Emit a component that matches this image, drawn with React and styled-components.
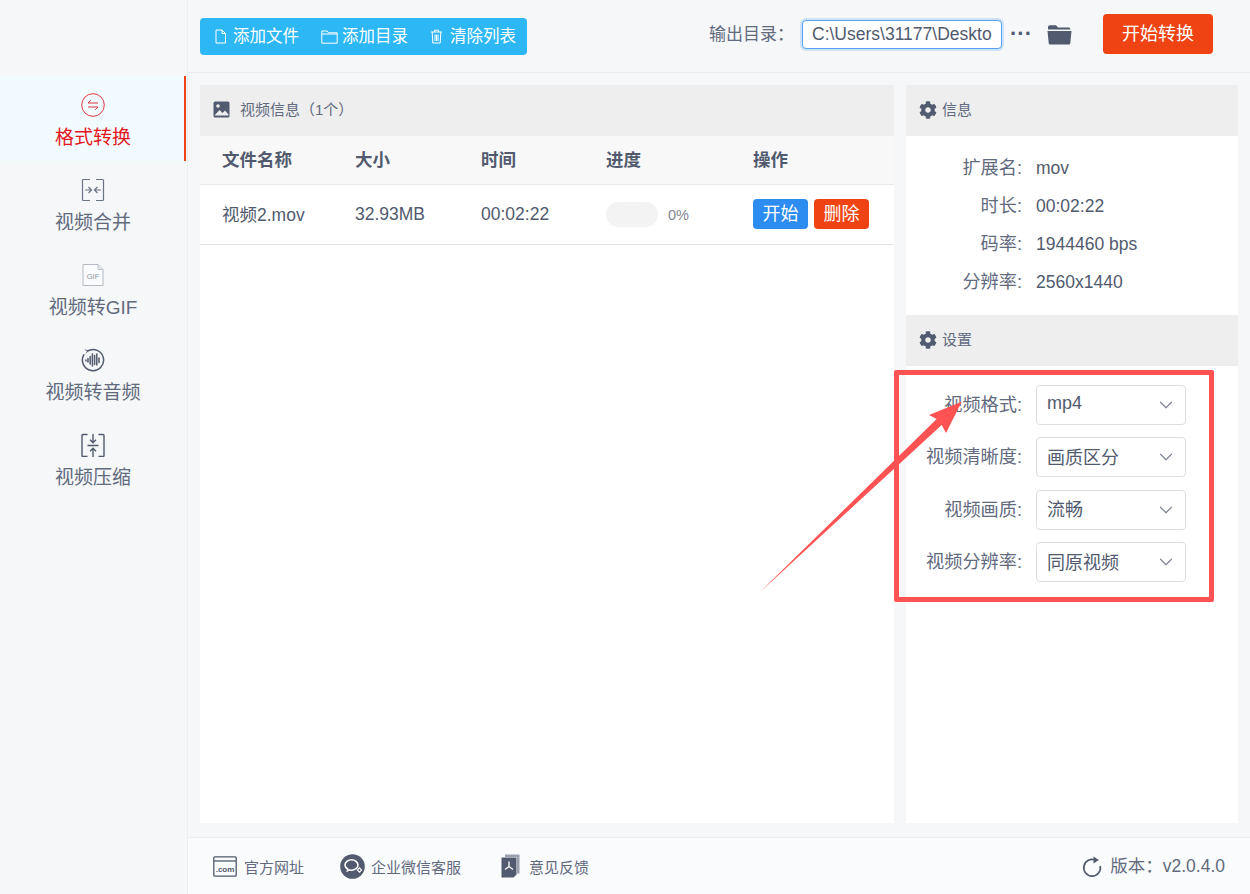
import React from "react";
import styled, { createGlobalStyle } from "styled-components";
import { ChevronDown } from "lucide-react";
import { FaCog } from "react-icons/fa";

const INK = "#515a6e";
const FONT = `"Liberation Sans", "Noto Sans CJK SC", sans-serif`;

const GlobalStyle = createGlobalStyle`
  html, body {
    margin: 0;
    padding: 0;
    background: #f5f7f9;
    font-family: ${FONT};
    color: ${INK};
  }
  * { box-sizing: border-box; }
`;

function ConvertIcon() {
  return (
    <svg width="24" height="24" viewBox="0 0 24 24" fill="none" stroke="#e0393e" strokeWidth="1">
      <circle cx="12" cy="12" r="11.3" />
      <path d="M7 10h10M7 10l2.800-2.800M17 14H7M17 14l-2.800 2.800" />
    </svg>
  );
}

function MergeIcon() {
  return (
    <svg width="24" height="24" viewBox="0 0 24 24" fill="none" stroke="#6b7386" strokeWidth="1.200">
      <path d="M9 1.500H2.500a1 1 0 0 0-1 1v19a1 1 0 0 0 1 1H9M15 1.500h6.500a1 1 0 0 1 1 1v19a1 1 0 0 1-1 1H15" />
      <path d="M4 12h6.500M7.500 9l3 3-3 3M20 12h-6.500M16.500 9l-3 3 3 3" />
    </svg>
  );
}

function GifIcon() {
  return (
    <svg width="24" height="24" viewBox="0 0 24 24" fill="none">
      <path d="M2 1.500h15l5 5v16H2z" fill="#fafbfc" stroke="#b4b9c4" strokeWidth="1" />
      <path d="M17 1.500v5h5" fill="#e4e6eb" stroke="#b4b9c4" strokeWidth="0.800" />
      <text x="12" y="16" textAnchor="middle" fontSize="7.500" fill="#8d93a1" fontFamily={FONT}>GIF</text>
    </svg>
  );
}

function AudioIcon() {
  return (
    <svg width="24" height="24" viewBox="0 0 24 24" fill="none" stroke={INK} strokeLinecap="round">
      <path d="M6.500 3A10.600 10.600 0 1 1 2.800 6.800" strokeWidth="1.500" />
      <path d="M4.300 1.800 6.800 3 5.300 5" strokeWidth="0.800" />
      <path d="M5 12v1M7 10.500v3.500M9.200 8.500v7.500M11.400 6v12" strokeWidth="1.500" />
      <path d="M13.600 7.500v9M15.800 6v11M18 10v4.500" strokeWidth="1.500" />
    </svg>
  );
}

function CompressIcon() {
  return (
    <svg width="24" height="24" viewBox="0 0 24 24" fill="none" stroke={INK} strokeWidth="1.400">
      <path d="M6.500 1.500H2a1 1 0 0 0-1 1v20a1 1 0 0 0 1 1h4.500M17.500 1.500H22a1 1 0 0 1 1 1v20a1 1 0 0 1-1 1h-4.500" />
      <path d="M6.500 12.500h11M12 1v8.500M9 6.800l3 3 3-3M12 24v-8.500M9 18.200l3-3 3 3" />
    </svg>
  );
}

function FileIcon() {
  return (
    <svg width="13" height="15" viewBox="0 0 13 15" fill="none" stroke="#fff" strokeWidth="1">
      <path d="M2 1h6l3.500 3.500V14H2zM8 1v3.500h3.500" />
    </svg>
  );
}

function FolderIcon() {
  return (
    <svg width="17" height="14" viewBox="0 0 17 14" fill="none" stroke="#fff" strokeWidth="1">
      <path d="M.8 1h5.400l1.300 1.800h8.700v10.400H.8zM.8 4h15.400" />
    </svg>
  );
}

function TrashIcon() {
  return (
    <svg width="13" height="15" viewBox="0 0 13 15" fill="none" stroke="#fff" strokeWidth="1">
      <path d="M1 3h11M4.500 3V1.200h4V3M2.200 3l.6 11h7.400l.6-11M5 5.500v6.500M6.500 5.500v6.500M8 5.500v6.500" />
    </svg>
  );
}

function ImageIcon() {
  return (
    <svg width="17" height="17" viewBox="0 0 17 17">
      <rect x="0.500" y="0.500" width="16" height="16" rx="1.500" fill={INK} />
      <circle cx="5" cy="5" r="1.800" fill="#eee" />
      <path d="M1.500 14.500 6.500 9l3 3 2.500-2.500 3.500 4v1z" fill="#eee" />
    </svg>
  );
}

function OpenFolderIcon() {
  return (
    <svg width="25" height="21" viewBox="0 0 25 21">
      <path d="M1 3.200C1 2 1.800 1.200 3 1.200h6l2 2.200h10.500c1 0 1.800.7 1.800 1.700v.4H1z" fill={INK} />
      <path d="M.5 7h24l-1.200 12c-.1 1-.8 1.600-1.800 1.600H3.500c-1 0-1.700-.6-1.800-1.600z" fill={INK} />
    </svg>
  );
}

function ComIcon() {
  return (
    <svg width="24" height="21" viewBox="0 0 24 21" fill="none" stroke={INK}>
      <rect x="0.800" y="0.800" width="22.400" height="19.400" rx="1" strokeWidth="1.300" />
      <path d="M1 5h22" strokeWidth="1.300" />
      <text x="12" y="16" textAnchor="middle" fontSize="8" fontWeight="700" fill={INK} stroke="none" fontFamily={FONT}>.com</text>
    </svg>
  );
}

function WeComIcon() {
  return (
    <svg width="25" height="25" viewBox="0 0 25 25">
      <circle cx="12.500" cy="12.500" r="12.300" fill={INK} />
      <path d="M5 11c0-3 3-5.200 6.500-5.200S18 8 18 11s-3 5.200-6.500 5.200c-.8 0-1.500-.1-2.200-.3l-1.900 1 .3-1.900C6 14 5 12.600 5 11z" fill="none" stroke="#fff" strokeWidth="1.600" />
      <path d="M19.500 13.800 21.600 16l-2.100 2.200-2.100-2.200z" fill="none" stroke="#fff" strokeWidth="1.100" />
    </svg>
  );
}

function PdfIcon() {
  return (
    <svg width="19" height="24" viewBox="0 0 19 24">
      <path d="M4 .5h14.500v19H16V3H4z" fill="#9aa0ae" />
      <path d="M.5 3.500h15v17l-3 3H.5z" fill={INK} />
      <path d="M8 7.500v5M8 12.500l-4 3M8 12.500l4 3" stroke="#fff" strokeWidth="1.300" fill="none" />
    </svg>
  );
}

function RefreshIcon() {
  return (
    <svg width="20" height="21" viewBox="0 0 20 21" fill="none">
      <path d="M13.500 4.200A8.300 8.300 0 1 0 18.200 10" stroke={INK} strokeWidth="1.700" />
      <path d="M11.500 .5 16.800 4l-5.300 3.500z" fill={INK} />
    </svg>
  );
}

const NAV_ITEMS = [
  { label: "格式转换", icon: <ConvertIcon />, active: true },
  { label: "视频合并", icon: <MergeIcon /> },
  { label: "视频转GIF", icon: <GifIcon /> },
  { label: "视频转音频", icon: <AudioIcon /> },
  { label: "视频压缩", icon: <CompressIcon /> },
];

const INFO_ROWS = [
  ["扩展名:", "mov"],
  ["时长:", "00:02:22"],
  ["码率:", "1944460 bps"],
  ["分辨率:", "2560x1440"],
];

const SETTING_ROWS = [
  ["视频格式:", "mp4"],
  ["视频清晰度:", "画质区分"],
  ["视频画质:", "流畅"],
  ["视频分辨率:", "同原视频"],
];

export default function App() {
  return (
    <Page>
      <GlobalStyle />
      <Sidebar>
        {NAV_ITEMS.map((item) => (
          <NavItem key={item.label} $active={item.active}>
            {item.icon}
            <NavLabel $active={item.active}>{item.label}</NavLabel>
          </NavItem>
        ))}
      </Sidebar>

      <Main>
        <TopBar>
          <ToolGroup>
            <ToolButton $gap={6}><FileIcon /><Lifted>添加文件</Lifted></ToolButton>
            <ToolButton $gap={4}><FolderIcon /><Lifted>添加目录</Lifted></ToolButton>
            <ToolButton $gap={7}><TrashIcon /><Lifted>清除列表</Lifted></ToolButton>
          </ToolGroup>
          <OutputGroup>
            <OutputLabel>输出目录：</OutputLabel>
            <PathInput readOnly value="C:\Users\31177\Desktop\output" />
            <Dots>···</Dots>
            <OpenFolderIcon />
            <ConvertButton>开始转换</ConvertButton>
          </OutputGroup>
        </TopBar>

        <Content>
          <VideoPanel>
            <PanelHeader $gap={10}><ImageIcon /><Lifted>视频信息（1个）</Lifted></PanelHeader>
            <TableHead>
              <Lifted>文件名称</Lifted>
              <Lifted>大小</Lifted>
              <Lifted>时间</Lifted>
              <Lifted>进度</Lifted>
              <Lifted>操作</Lifted>
            </TableHead>
            <TableRow>
              <Lifted>视频2.mov</Lifted>
              <span>32.93MB</span>
              <span>00:02:22</span>
              <ProgressCell>
                <ProgressTrack />
                <Percent>0%</Percent>
              </ProgressCell>
              <Actions>
                <SmallButton $color="#2d8cf0">开始</SmallButton>
                <SmallButton $color="#f04313">删除</SmallButton>
              </Actions>
            </TableRow>
          </VideoPanel>

          <SidePanel>
            <PanelHeader $gap={5}><FaCog size={18} color={INK} /><Lifted>信息</Lifted></PanelHeader>
            <InfoList>
              {INFO_ROWS.map(([label, value]) => (
                <InfoRow key={label}>
                  <RowLabel>{label}</RowLabel>
                  <span>{value}</span>
                </InfoRow>
              ))}
            </InfoList>
            <PanelHeader $gap={5}><FaCog size={18} color={INK} /><Lifted>设置</Lifted></PanelHeader>
            <SettingList>
              {SETTING_ROWS.map(([label, value]) => (
                <SettingRow key={label}>
                  <RowLabel>{label}</RowLabel>
                  <SelectBox>
                    <Lifted>{value}</Lifted>
                    <ChevronDown size={22} color="#808695" strokeWidth={1.300} />
                  </SelectBox>
                </SettingRow>
              ))}
            </SettingList>
          </SidePanel>
        </Content>

        <Footer>
          <FooterLinks>
            <FooterLink $gap={7}><ComIcon /><span>官方网址</span></FooterLink>
            <FooterLink $gap={6}><WeComIcon /><span>企业微信客服</span></FooterLink>
            <FooterLink $gap={9} $offset={4}><PdfIcon /><span>意见反馈</span></FooterLink>
          </FooterLinks>
          <Version>
            <RefreshIcon />
            <Lifted>版本：v2.0.4.0</Lifted>
          </Version>
        </Footer>
      </Main>

      <Highlight />
      <Arrow width="1250" height="894" viewBox="0 0 1250 894">
        <polygon points="760,592 936.700,419 929,415 961.700,401.700 946,433 941.700,425" fill="#ff5252" />
      </Arrow>
    </Page>
  );
}

const Page = styled.div`
  position: relative;
  display: flex;
  width: 1250px;
  height: 894px;
  overflow: hidden;
  background: #f5f7f9;
`;

// Noto CJK sits lower in its line box than the reference font
const Lifted = styled.span`
  padding-bottom: 3px;
`;

const Sidebar = styled.nav`
  flex: 0 0 188px;
  padding: 76px 1px 0 0;
  border-right: 1px solid #eceef1;
`;

const NavItem = styled.div`
  display: flex;
  flex-direction: column;
  align-items: center;
  height: 85px;
  padding: 17px 0 0 2px;
  background: ${(p) => (p.$active ? "#f0faff" : "transparent")};
  border-right: 2px solid ${(p) => (p.$active ? "#f04313" : "transparent")};
`;

const NavLabel = styled.span`
  margin-top: 8px;
  font-size: 19px;
  line-height: 26px;
  color: ${(p) => (p.$active ? "#e4161d" : "#626a7e")};
`;

const Main = styled.div`
  flex: 1;
  display: flex;
  flex-direction: column;
  min-width: 0;
`;

const TopBar = styled.header`
  display: flex;
  align-items: center;
  justify-content: space-between;
  height: 73px;
  padding: 0 37px 0 12px;
  border-bottom: 1px solid #e9ebee;
`;

const ToolGroup = styled.div`
  display: flex;
  align-items: center;
  gap: 22px;
  height: 37px;
  margin-top: 1px;
  padding: 0 11px 0 14px;
  background: #2db7f5;
  border-radius: 4px;
`;

const ToolButton = styled.span`
  display: flex;
  align-items: center;
  gap: ${(p) => p.$gap}px;
  font-size: 16.500px;
  color: #fff;
`;

const OutputGroup = styled.div`
  display: flex;
  align-items: center;
  margin-bottom: 4px;
`;

const OutputLabel = styled.span`
  margin-right: 8px;
  padding-bottom: 3px;
  font-size: 17px;
  color: #626a7e;
`;

const PathInput = styled.input`
  width: 200px;
  height: 29px;
  padding: 0 9px;
  border: 1px solid #57a3f3;
  border-radius: 4px;
  box-shadow: 0 0 0 2px rgba(45, 140, 240, 0.2);
  font: 17.500px ${FONT};
  color: ${INK};
  background: #fff;
  outline: none;
`;

const Dots = styled.span`
  width: 45px;
  padding-left: 8px;
  font-size: 22px;
  font-weight: 700;
  line-height: 20px;
  color: ${INK};
`;

const ConvertButton = styled.button`
  width: 110px;
  height: 40px;
  margin-left: 31px;
  padding: 0 0 4px;
  border: 0;
  border-radius: 4px;
  background: #f04313;
  color: #fff;
  font: 18px ${FONT};
`;

const Content = styled.main`
  flex: 1;
  display: flex;
  gap: 12px;
  padding: 12px 12px 14px;
  min-height: 0;
`;

const VideoPanel = styled.section`
  flex: 0 0 694px;
  background: #fff;
`;

const SidePanel = styled.aside`
  flex: 1;
  background: #fff;
`;

const PanelHeader = styled.div`
  display: flex;
  align-items: center;
  gap: ${(p) => p.$gap}px;
  height: 51px;
  padding: 0 0 2px 13px;
  background: #eeeeee;
  font-size: 15px;
  color: #626a7e;
`;

const columns = `
  display: grid;
  grid-template-columns: 133px 126px 125px 147px 1fr;
  align-items: center;
  padding-left: 22px;
`;

const TableHead = styled.div`
  ${columns}
  height: 49px;
  background: #f8f8f9;
  border-bottom: 1px solid #e8eaec;
  font-size: 17.500px;
  font-weight: 700;
`;

const TableRow = styled.div`
  ${columns}
  height: 60px;
  border-bottom: 1px solid #e0e2e6;
  font-size: 17.500px;
`;

const ProgressCell = styled.div`
  display: flex;
  align-items: center;
  gap: 10px;
`;

const ProgressTrack = styled.div`
  width: 52px;
  height: 25px;
  border-radius: 13px;
  background: #f3f3f3;
`;

const Percent = styled.span`
  font-size: 14.500px;
  color: #808695;
`;

const Actions = styled.div`
  display: flex;
  gap: 6px;
  margin-bottom: 1px;
`;

const SmallButton = styled.button`
  width: 55px;
  height: 30px;
  padding: 0 0 4px;
  border: 0;
  border-radius: 4px;
  background: ${(p) => p.$color};
  color: #fff;
  font: 18px ${FONT};
`;

const InfoList = styled.div`
  display: flex;
  flex-direction: column;
  height: 179px;
  padding-top: 13px;
`;

const InfoRow = styled.div`
  display: flex;
  align-items: center;
  gap: 14px;
  height: 38px;
  font-size: 17.500px;
`;

const RowLabel = styled.span`
  flex: 0 0 116px;
  padding-bottom: 4px;
  text-align: right;
  font-size: 18.200px;
  color: #626a7e;
  white-space: nowrap;
`;

const SettingList = styled.div`
  display: flex;
  flex-direction: column;
  gap: 12.400px;
  padding-top: 19px;
`;

const SettingRow = styled.div`
  display: flex;
  align-items: center;
  gap: 14px;
`;

const SelectBox = styled.div`
  display: flex;
  align-items: center;
  justify-content: space-between;
  width: 150px;
  height: 40px;
  padding: 0 8px 0 10px;
  border: 1px solid #dcdee2;
  border-radius: 4px;
  background: #fff;
  font-size: 18px;
`;

const Footer = styled.footer`
  display: flex;
  align-items: center;
  justify-content: space-between;
  height: 57px;
  padding: 0 25px;
  border-top: 1px solid #e9ebee;
  background: #fafbfc;
`;

const FooterLinks = styled.div`
  display: flex;
  align-items: center;
  gap: 36px;
`;

const FooterLink = styled.span`
  display: flex;
  align-items: center;
  gap: ${(p) => p.$gap}px;
  margin-left: ${(p) => p.$offset || 0}px;
  font-size: 15px;
  color: #626a7e;
`;

const Version = styled.span`
  display: flex;
  align-items: center;
  gap: 8px;
  font-size: 17.500px;
  color: #626a7e;
`;

const Highlight = styled.div`
  position: absolute;
  left: 894px;
  top: 370px;
  width: 320px;
  height: 232px;
  border: 5px solid #ff5252;
  border-radius: 2px;
  pointer-events: none;
`;

const Arrow = styled.svg`
  position: absolute;
  left: 0;
  top: 0;
  pointer-events: none;
`;
